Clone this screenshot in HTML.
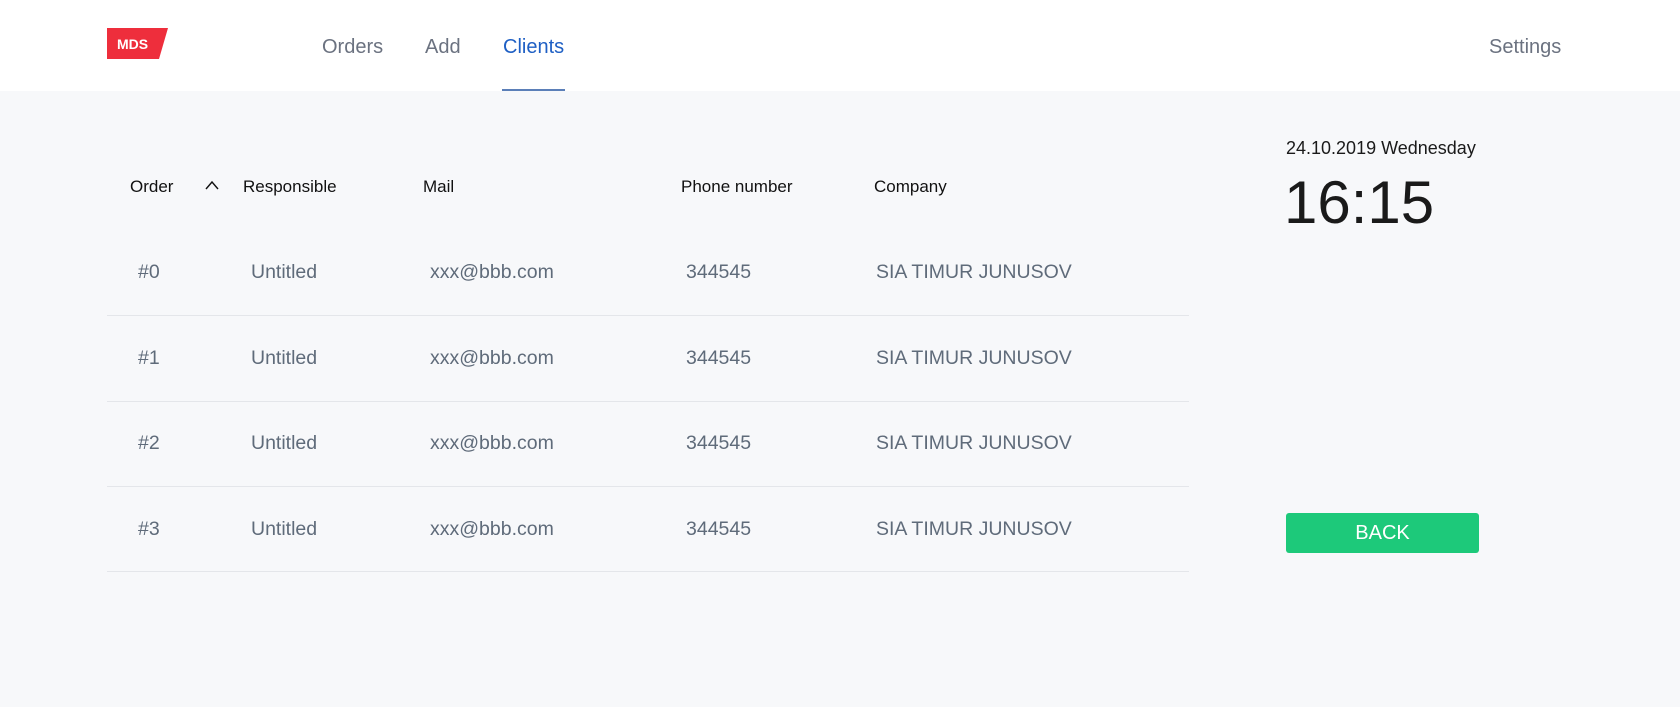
<!DOCTYPE html>
<html><head><style>
body{margin:0;width:1680px;height:707px;background:#f7f8fa;font-family:"Liberation Sans",sans-serif;position:relative;overflow:hidden}
.hdr{position:absolute;left:0;top:0;width:1680px;height:91px;background:#fff}
.a{position:absolute;white-space:nowrap}
.nav{font-size:20px;color:#6b7280;top:36px}
.th{font-size:17px;color:#111;top:177px}
.td{font-size:19.5px;color:#5f6b7a}
.line{position:absolute;left:107px;width:1082px;height:1px;background:#e4e6ea}
</style></head><body>
<div class="hdr"></div>
<svg class="a" style="left:107px;top:28px" width="62" height="31"><polygon points="0,0 61,0 52,31 0,31" fill="#ee2e3c"/><text x="10" y="21" font-family="Liberation Sans" font-weight="bold" font-size="14" fill="#fff">MDS</text></svg>
<div class="a nav" style="left:322px">Orders</div>
<div class="a nav" style="left:425px">Add</div>
<div class="a nav" style="left:503px;color:#1e5fc4">Clients</div>
<div class="a" style="left:502px;top:89px;width:63px;height:2px;background:#5b7fb8"></div>
<div class="a nav" style="left:1489px">Settings</div>
<div class="a th" style="left:130px">Order</div>
<svg class="a" style="left:205px;top:180px" width="14" height="10"><path d="M1 9L7 2L13 9" fill="none" stroke="#111" stroke-width="1.4"/></svg>
<div class="a th" style="left:243px">Responsible</div>
<div class="a th" style="left:423px">Mail</div>
<div class="a th" style="left:681px">Phone number</div>
<div class="a th" style="left:874px">Company</div>
<div class="a td" style="left:138px;top:261px">#0</div><div class="a td" style="left:251px;top:261px">Untitled</div><div class="a td" style="left:430px;top:261px">xxx@bbb.com</div><div class="a td" style="left:686px;top:261px">344545</div><div class="a td" style="left:876px;top:261px">SIA TIMUR JUNUSOV</div>
<div class="line" style="top:315px"></div>
<div class="a td" style="left:138px;top:347px">#1</div><div class="a td" style="left:251px;top:347px">Untitled</div><div class="a td" style="left:430px;top:347px">xxx@bbb.com</div><div class="a td" style="left:686px;top:347px">344545</div><div class="a td" style="left:876px;top:347px">SIA TIMUR JUNUSOV</div>
<div class="line" style="top:401px"></div>
<div class="a td" style="left:138px;top:432px">#2</div><div class="a td" style="left:251px;top:432px">Untitled</div><div class="a td" style="left:430px;top:432px">xxx@bbb.com</div><div class="a td" style="left:686px;top:432px">344545</div><div class="a td" style="left:876px;top:432px">SIA TIMUR JUNUSOV</div>
<div class="line" style="top:486px"></div>
<div class="a td" style="left:138px;top:518px">#3</div><div class="a td" style="left:251px;top:518px">Untitled</div><div class="a td" style="left:430px;top:518px">xxx@bbb.com</div><div class="a td" style="left:686px;top:518px">344545</div><div class="a td" style="left:876px;top:518px">SIA TIMUR JUNUSOV</div>
<div class="line" style="top:571px"></div>
<div class="a" style="left:1286px;top:138px;font-size:18px;color:#1a1a1a">24.10.2019 Wednesday</div>
<div class="a" style="left:1284px;top:168px;font-size:60px;color:#1a1a1a">16:15</div>
<div class="a" style="left:1286px;top:513px;width:193px;height:40px;background:#1dc97a;border-radius:3px;color:#fff;font-size:20px;text-align:center;line-height:40px">BACK</div>
</body></html>
